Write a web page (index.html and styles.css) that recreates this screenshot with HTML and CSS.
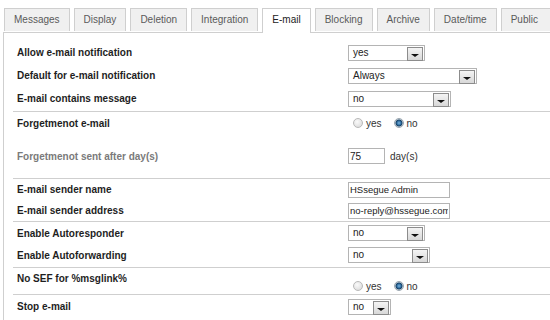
FILE: index.html
```html
<!DOCTYPE html>
<html lang="en">
  <head>
    <meta charset="UTF-8" />
    <title>E-mail settings</title>
    <link rel="stylesheet" href="styles.css">
  </head>
  <body>
    <ul class="tabs">
      <li class="tab">Messages</li>
      <li class="tab">Display</li>
      <li class="tab">Deletion</li>
      <li class="tab">Integration</li>
      <li class="tab active">E-mail</li>
      <li class="tab">Blocking</li>
      <li class="tab">Archive</li>
      <li class="tab">Date/time</li>
      <li class="tab">Public</li>
    </ul>

    <div class="panel">
      <div class="group group-first">
        <div class="row">
          <div class="label">Allow e-mail notification</div>
          <div class="field"><span class="select sel-yes">yes<span class="arrow"></span></span></div>
        </div>
        <div class="row">
          <div class="label">Default for e-mail notification</div>
          <div class="field"><span class="select sel-always">Always<span class="arrow"></span></span></div>
        </div>
        <div class="row">
          <div class="label">E-mail contains message</div>
          <div class="field"><span class="select sel-contains">no<span class="arrow"></span></span></div>
        </div>
      </div>

      <div class="group">
        <div class="row row-radio">
          <div class="label">Forgetmenot e-mail</div>
          <div class="field radios">
            <span class="radio"></span><span class="radio-text">yes</span>
            <span class="radio checked"></span><span class="radio-text">no</span>
          </div>
        </div>
        <div class="row row-tall">
          <div class="label muted">Forgetmenot sent after day(s)</div>
          <div class="field"><input class="text text-days" type="text" value="75" /><span class="unit">day(s)</span></div>
        </div>
      </div>

      <div class="group">
        <div class="row row-short">
          <div class="label">E-mail sender name</div>
          <div class="field"><input class="text text-wide" type="text" value="HSsegue Admin" /></div>
        </div>
        <div class="row row-short">
          <div class="label">E-mail sender address</div>
          <div class="field"><input class="text text-wide" type="text" value="no-reply@hssegue.com" /></div>
        </div>
      </div>

      <div class="group group-pad">
        <div class="row row-mid">
          <div class="label">Enable Autoresponder</div>
          <div class="field"><span class="select sel-yes">no<span class="arrow"></span></span></div>
        </div>
        <div class="row row-mid">
          <div class="label">Enable Autoforwarding</div>
          <div class="field"><span class="select sel-forward">no<span class="arrow"></span></span></div>
        </div>
      </div>

      <div class="group">
        <div class="row row-sef">
          <div class="label">No SEF for %msglink%</div>
          <div class="field radios">
            <span class="radio"></span><span class="radio-text">yes</span>
            <span class="radio checked"></span><span class="radio-text">no</span>
          </div>
        </div>
      </div>

      <div class="group group-last">
        <div class="row row-short">
          <div class="label">Stop e-mail</div>
          <div class="field"><span class="select sel-stop">no<span class="arrow"></span></span></div>
        </div>
      </div>
    </div>
  </body>
</html>
```

FILE: styles.css
```css
:root {
  --line: #cfcfcf;
  --text: #1e1e1e;
  --muted: #7a7a7a;
  --field-border: #b4b4b4;
}
html,
body {
  margin: 0;
  padding: 0;
  background: #fff;
  overflow: hidden;
}
body {
  font-family: "Liberation Sans", Arial, sans-serif;
  font-size: 10px;
  color: var(--text);
  width: 600px;
}
.tabs {
  list-style: none;
  margin: 0 0 0 4px;
  padding: 8px 0 0 0;
  display: flex;
  gap: 4px;
  position: relative;
  z-index: 1;
}
.tab {
  height: 22px;
  line-height: 22px;
  padding: 0 9px;
  border: 1px solid var(--line);
  border-bottom: none;
  background: #f0f0f0;
  color: #5a5a5a;
  white-space: nowrap;
}
.tab:last-child {
  padding-right: 14px;
}
.tab.active {
  background: #fff;
  color: #222;
  height: 24px;
  margin-bottom: -1px;
}
.panel {
  margin-left: 3px;
  border-top: 1px solid var(--line);
  border-left: 1px solid var(--line);
  height: 300px;
}
.group {
  margin-left: 9px;
  border-bottom: 1px solid var(--line);
}
.group-first {
  padding: 8px 0 1px;
}
.group-pad {
  padding-bottom: 1px;
}
.group-last {
  border-bottom: none;
  padding-top: 1px;
}
.row {
  display: grid;
  grid-template-columns: 335px 1fr;
  align-items: center;
  height: 23px;
}
.row-radio {
  height: 22px;
}
.row-radio .field {
  margin-top: -1px;
}
.row-short {
  height: 21px;
}
.row-mid {
  height: 22px;
}
.row-tall {
  height: 44px;
}
.row-sef {
  height: 26px;
  align-items: start;
}
.row-sef .label {
  padding-top: 5px;
}
.row-sef .field {
  padding-top: 11px;
}
.label {
  padding-left: 4px;
  font-weight: bold;
  white-space: nowrap;
}
.label.muted {
  color: var(--muted);
}
.field {
  display: flex;
  align-items: center;
}
.select {
  position: relative;
  box-sizing: border-box;
  height: 16px;
  line-height: 14px;
  border: 1px solid var(--field-border);
  background: #fff;
  padding-left: 4px;
  color: #222;
}
.sel-yes { width: 77px; }
.sel-always { width: 129px; }
.sel-contains { width: 103px; }
.sel-forward { width: 82px; }
.sel-stop { width: 43px; }
.arrow {
  position: absolute;
  top: 1px;
  right: 1px;
  width: 14px;
  height: 12px;
  border: 1px solid #8c8c8c;
  background: linear-gradient(#f4f4f4, #d8d8d8);
}
.arrow::after {
  content: "";
  position: absolute;
  left: 3px;
  top: 6px;
  border-left: 4px solid transparent;
  border-right: 4px solid transparent;
  border-top: 3px solid #111;
}
.text {
  box-sizing: border-box;
  height: 16px;
  margin: 0;
  padding: 0 1px;
  border: 1px solid var(--field-border);
  font-family: "Liberation Sans", Arial, sans-serif;
  font-size: 10px;
  color: #222;
  outline: none;
}
.text-days {
  width: 37px;
}
.text-wide {
  width: 102px;
  font-size: 9.5px;
}
.unit {
  margin-left: 5px;
  color: #333;
}
.radios {
  padding-left: 5px;
}
.radio {
  box-sizing: border-box;
  width: 10px;
  height: 10px;
  border-radius: 50%;
  border: 1px solid #b9b9b9;
  background: radial-gradient(circle at 40% 35%, #fafafa, #d6d6d6);
}
.radio.checked {
  border: 1px solid #9aa6b0;
  background: radial-gradient(circle, #7fb4dc 0, #2f6fa3 2px, #163f63 3px, #d9e1e8 4px);
}
.radio-text {
  margin: 2px 0 0 3px;
  color: #333;
}
.radio-text + .radio {
  margin-left: 12px;
}
```
